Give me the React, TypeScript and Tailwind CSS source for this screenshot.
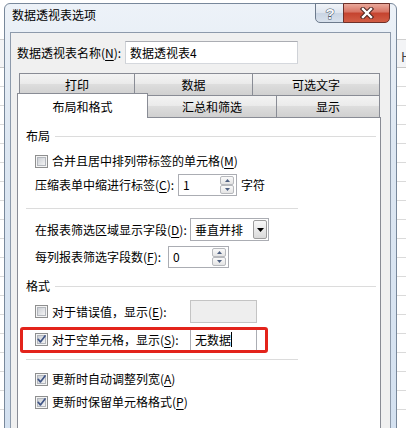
import React from "react";

function U({ c }: { c: string }) {
  return <span className="underline underline-offset-[2px]">{c}</span>;
}

function CheckBox({ checked = false }: { checked?: boolean }) {
  return (
    <svg width="13" height="13" viewBox="0 0 13 13" className="block shrink-0">
      <defs>
        <linearGradient id="cbg" x1="0" y1="0" x2="1" y2="1">
          <stop offset="0" stopColor="#c9cdd3" />
          <stop offset="1" stopColor="#f6f6f6" />
        </linearGradient>
      </defs>
      <rect x="0.5" y="0.5" width="12" height="12" fill="#f5f5f5" stroke="#8e8f8f" />
      <rect x="2.5" y="2.5" width="8" height="8" fill="url(#cbg)" stroke="#b3b7bd" />
      {checked && (
        <path
          d="M3.2 6.3 L5.4 8.9 L10 3"
          fill="none"
          stroke="#3f5485"
          strokeWidth="1.7"
          strokeLinecap="round"
          strokeLinejoin="round"
        />
      )}
    </svg>
  );
}

function SpinBtn({ up }: { up?: boolean }) {
  return (
    <div className="flex h-[9px] w-[14px] items-center justify-center rounded-[2px] border border-[#b7b9bd] bg-[linear-gradient(#fafafa,#e4e4e4)]">
      <svg width="5" height="3" viewBox="0 0 5 3" className="block">
        {up ? <path d="M0 3h5L2.5 0z" fill="#4d5f80" /> : <path d="M0 0h5L2.5 3z" fill="#4d5f80" />}
      </svg>
    </div>
  );
}

function Spinner({ value, className }: { value: string; className: string }) {
  return (
    <div className={`flex items-center border border-[#abadb3] bg-white pl-[4px] pr-[2px] ${className}`}>
      <span className="flex-1">{value}</span>
      <div className="flex flex-col gap-0">
        <SpinBtn up />
        <SpinBtn />
      </div>
    </div>
  );
}

export default function App() {
  const rows = Array.from({ length: 20 }, (_, i) => i);
  const tabBase =
    "flex items-center justify-center border border-[#898c95] bg-[linear-gradient(#f3f3f3,#ebebeb_45%,#dddddd_50%,#d0d0d0)]";
  return (
    <div className="relative h-[428px] w-[406px] overflow-hidden bg-white font-['Noto_Sans_CJK_SC','Noto_Sans',sans-serif] text-[12px] leading-[16px] text-black">
      {/* Excel sheet behind */}
      <div className="flex flex-col">
        <div className="h-[40px] border-b border-[#d0d0d0] bg-white" />
        <div className="flex h-[28px] items-end border-b border-[#c8c8c8] bg-[#f3f4f6] pb-[2px] pl-[401px] text-[13px] text-[#444]">
          H
        </div>
        {rows.map((i) => (
          <div key={i} className="h-[19px] border-b border-[#dadada]" />
        ))}
      </div>

      {/* Dialog window */}
      <div className="absolute left-[4px] top-[3px] flex h-[470px] w-[393px] flex-col rounded-t-[6px] border border-[#78889b] bg-[linear-gradient(#edf2f8,#dde7f2_30%,#d2e0f0)]">
        {/* title bar */}
        <div className="flex h-[28px] items-start justify-between">
          <span className="mt-[3px] pl-[7px]">数据透视表选项</span>
          <div className="-mt-px mr-[6px] flex">
            <div className="flex h-[20px] w-[29px] items-center justify-center rounded-bl-[5px] border border-[#6c7a8c] bg-[linear-gradient(#f1f4f8,#dde4ee_50%,#c9d4e3_50%,#d8e1ec)]">
              <svg width="12" height="15" viewBox="0 0 12 15" className="block">
                <text
                  x="6"
                  y="13"
                  textAnchor="middle"
                  fontSize="15"
                  fontWeight="bold"
                  fontFamily="Liberation Sans, sans-serif"
                  fill="#f4f6f9"
                  stroke="#4b586a"
                  strokeWidth="1"
                  paintOrder="stroke"
                >
                  ?
                </text>
              </svg>
            </div>
            <div className="-ml-px flex h-[20px] w-[47px] items-center justify-center rounded-br-[5px] border border-[#6e3029] bg-[linear-gradient(#eaa99b,#d77363_45%,#c4432f_50%,#d25d45)]">
              <svg width="16" height="12" viewBox="0 0 16 12" className="block">
                <path d="M4 2 L12 10 M12 2 L4 10" stroke="#4d2520" strokeWidth="4.4" strokeLinecap="square" />
                <path d="M4 2 L12 10 M12 2 L4 10" stroke="#ffffff" strokeWidth="2.4" strokeLinecap="square" />
              </svg>
            </div>
          </div>
        </div>

        {/* client area */}
        <div className="ml-[5px] flex w-[381px] flex-1 flex-col border border-[#8d9aab] bg-[#f0f0f0] pl-[6px] pt-[8px]">
          {/* name row */}
          <div className="flex items-center">
            <span className="w-[108px] whitespace-nowrap">
              数据透视表名称(<U c="N" />):
            </span>
            <div className="flex h-[23px] w-[173px] items-center border border-[#abadb3] border-b-[#d5d8dd] border-l-[#cfd2d7] border-r-[#cfd2d7] bg-white pl-[4px]">
              数据透视表4
            </div>
          </div>

          {/* tabs */}
          <div className="mt-[9px] flex flex-col">
            <div className="ml-[2px] flex h-[22px]">
              <div className={`${tabBase} w-[116px] border-b-0`}>打印</div>
              <div className={`${tabBase} -ml-px w-[119px] border-b-0`}>数据</div>
              <div className={`${tabBase} -ml-px w-[128px] border-b-0`}>可选文字</div>
            </div>
            <div className="relative z-10 -mt-[2px] flex h-[24px] items-end">
              <div className="-mb-px flex h-[25px] w-[131px] items-center justify-center border border-b-0 border-[#898c95] bg-white pt-[1px]">
                布局和格式
              </div>
              <div className={`${tabBase} -ml-px h-[22px] w-[130px] border-b-0`}>汇总和筛选</div>
              <div className={`${tabBase} -ml-px h-[22px] w-[104px] border-b-0`}>显示</div>
            </div>
          </div>

          {/* panel */}
          <div className="flex w-[364px] flex-1 flex-col border border-[#898c95] bg-white">
            {/* 布局 */}
            <div className="mt-[10px] flex h-[16px] items-center pl-[8px] pr-[4px]">
              <span>布局</span>
              <div className="ml-[5px] h-px flex-1 bg-[#dcdcdc]" />
            </div>
            <div className="mt-[9px] flex h-[16px] items-center gap-[4px] pl-[17px]">
              <CheckBox />
              <span className="whitespace-nowrap">
                合并且居中排列带标签的单元格(<U c="M" />)
              </span>
            </div>
            <div className="mt-[5px] flex items-center pl-[17px]">
              <span className="w-[143px] whitespace-nowrap">
                压缩表单中缩进行标签(<U c="C" />):
              </span>
              <Spinner value="1" className="h-[22px] w-[59px]" />
              <span className="ml-[4px]">字符</span>
            </div>
            <div className="ml-[8px] mt-[12px] h-px w-[272px] bg-[#dcdcdc]" />
            <div className="mt-[9px] flex items-center pl-[17px]">
              <span className="w-[155px] whitespace-nowrap">
                在报表筛选区域显示字段(<U c="D" />):
              </span>
              <div className="flex h-[23px] w-[79px] items-center border border-[#abadb3] bg-white pl-[4px] pr-px">
                <span className="flex-1">垂直并排</span>
                <div className="flex h-[19px] w-[14px] items-center justify-center rounded-[2px] border border-[#9c9c9c] bg-[linear-gradient(#f8f8f8,#dadada)]">
                  <svg width="7" height="4" viewBox="0 0 7 4" className="block">
                    <path d="M0 0h7L3.5 4z" fill="#000" />
                  </svg>
                </div>
              </div>
            </div>
            <div className="mt-[5px] flex items-center pl-[17px]">
              <span className="w-[133px] whitespace-nowrap">
                每列报表筛选字段数(<U c="F" />):
              </span>
              <Spinner value="0" className="h-[22px] w-[61px]" />
            </div>

            {/* 格式 */}
            <div className="mt-[10px] flex h-[16px] items-center pl-[8px] pr-[4px]">
              <span>格式</span>
              <div className="ml-[5px] h-px flex-1 bg-[#dcdcdc]" />
            </div>
            <div className="mt-[6px] flex items-center pl-[17px]">
              <div className="flex w-[155px] items-center gap-[4px]">
                <CheckBox />
                <span className="whitespace-nowrap">
                  对于错误值，显示(<U c="E" />):
                </span>
              </div>
              <div className="h-[23px] w-[67px] border border-[#c4c4c4] bg-[#eeeeee]" />
            </div>
            <div className="relative mt-[5px] flex items-center pl-[17px]">
              <div className="flex w-[155px] items-center gap-[4px]">
                <CheckBox checked />
                <span className="whitespace-nowrap">
                  对于空单元格，显示(<U c="S" />):
                </span>
              </div>
              <div className="flex h-[23px] w-[67px] items-center border border-[#abadb3] bg-white pl-[4px]">
                <span>无数据</span>
                <span className="h-[15px] w-px bg-black" />
              </div>
              <div className="absolute left-[2px] top-[-1px] h-[26px] w-[248px] rounded-[3px] border-[3px] border-[#e3231b]" />
            </div>
            <div className="ml-[8px] mt-[8px] h-px w-[272px] bg-[#dcdcdc]" />
            <div className="mt-[11px] flex h-[16px] items-center gap-[4px] pl-[17px]">
              <CheckBox checked />
              <span className="whitespace-nowrap">
                更新时自动调整列宽(<U c="A" />)
              </span>
            </div>
            <div className="mt-[7px] flex h-[16px] items-center gap-[4px] pl-[17px]">
              <CheckBox checked />
              <span className="whitespace-nowrap">
                更新时保留单元格格式(<U c="P" />)
              </span>
            </div>
          </div>
        </div>
      </div>
    </div>
  );
}
